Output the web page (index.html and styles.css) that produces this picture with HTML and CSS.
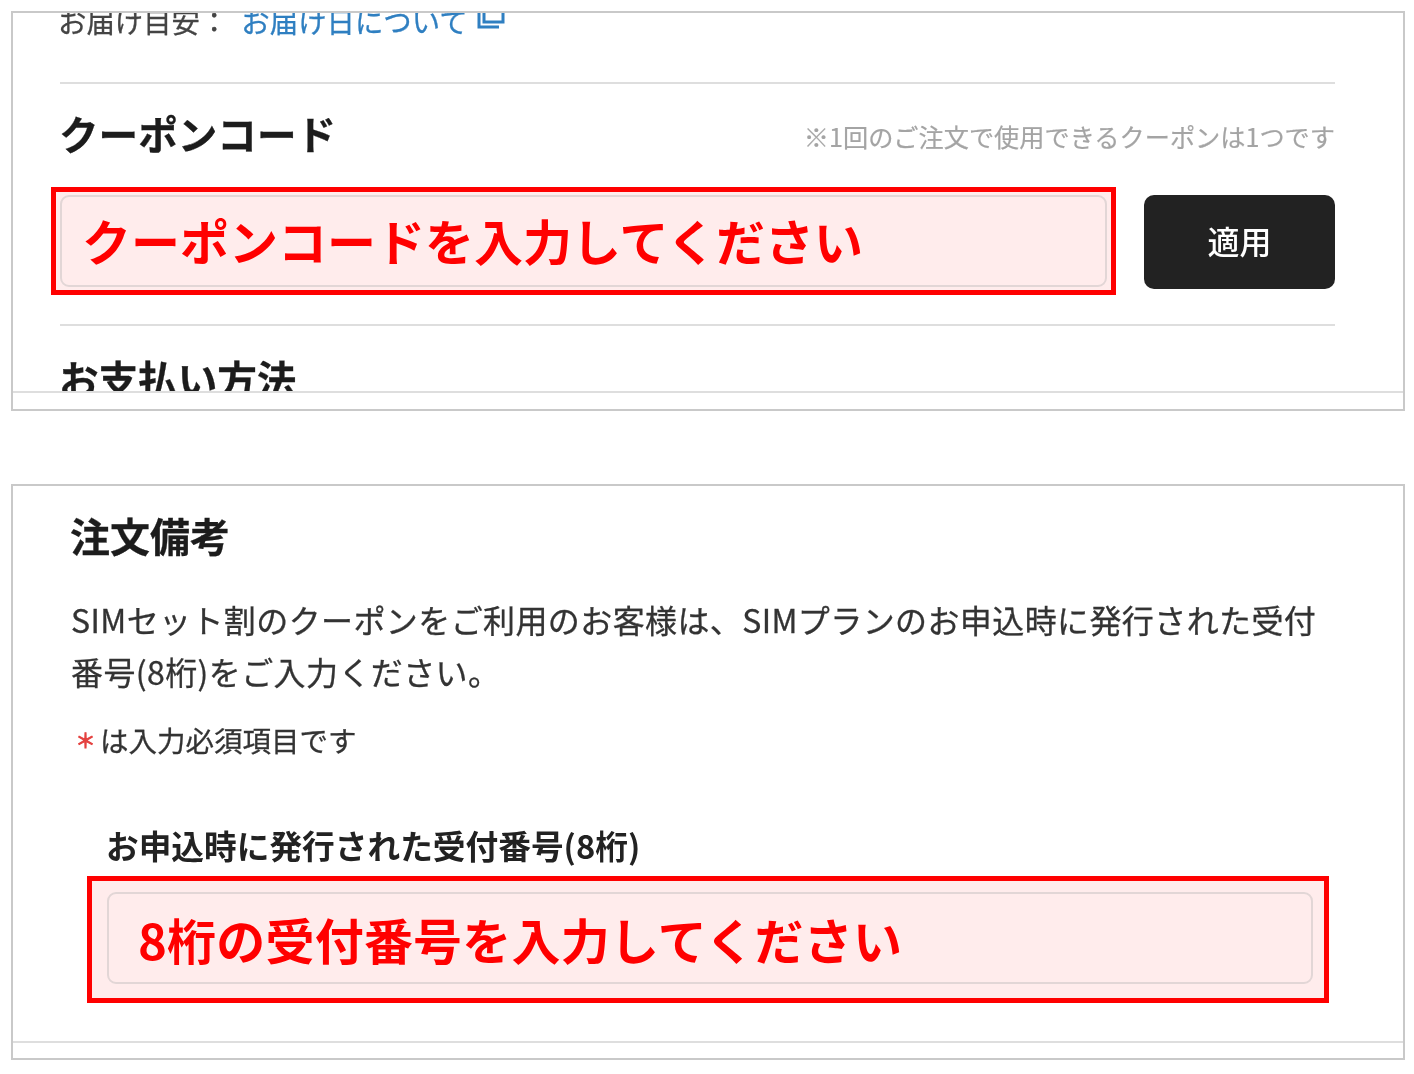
FILE: index.html
```html
<!DOCTYPE html>
<html lang="ja">
<head>
<meta charset="utf-8">
<title>クーポンコード</title>
<link rel="stylesheet" href="styles.css">
</head>
<body>
<main class="page">
  <section class="panel panel-top">
    <div class="panel-body panel-body-top">
      <p class="delivery">お届け目安：<a class="delivery-link" href="#">お届け日について<svg class="ext-icon" viewBox="0 0 28 28" aria-hidden="true"><path d="M2 2V20H22" fill="none" stroke="#2f7fc1" stroke-width="3"/><rect x="7" y="-4" width="19" height="19" fill="none" stroke="#2f7fc1" stroke-width="3"/></svg></a></p>
      <hr class="rule">
      <div class="coupon-head">
        <h2 class="heading heading-coupon">クーポンコード</h2>
        <span class="coupon-note">※1回のご注文で使用できるクーポンは1つです</span>
      </div>
      <div class="coupon-row">
        <div class="mark mark-coupon">
          <input class="field field-coupon" type="text" placeholder="クーポンコードを入力してください">
        </div>
        <button class="apply" type="button">適用</button>
      </div>
      <hr class="rule rule-lower">
      <h2 class="heading heading-pay">お支払い方法</h2>
    </div>
  </section>
  <section class="panel panel-bottom">
    <div class="panel-body panel-body-bottom">
      <h2 class="heading">注文備考</h2>
      <p class="lead">SIMセット割のクーポンをご利用のお客様は、SIMプランのお申込時に発行された受付番号(8桁)をご入力ください。</p>
      <p class="required"><span class="star">＊</span>は入力必須項目です</p>
      <label class="field-label" for="receipt">お申込時に発行された受付番号(8桁)</label>
      <div class="mark mark-receipt">
        <input id="receipt" class="field field-receipt" type="text" placeholder="8桁の受付番号を入力してください">
      </div>
    </div>
  </section>
</main>
</body>
</html>
```
FILE: styles.css
```css
* { box-sizing: border-box; }
html, body { margin: 0; background: #fff; }
body {
  font-family: "Noto Sans CJK JP", "Noto Sans", sans-serif;
  color: #333;
}
.page {
  padding: 11px 9px 0 11px;
  filter: blur(0.7px);
}
.panel {
  border: 2px solid #c9c9c9;
  background: #fff;
}
.panel-top { height: 400px; margin-bottom: 73px; }
.panel-bottom { height: 576px; }
.panel-body {
  overflow: hidden;
  border-bottom: 2px solid #dedede;
}
.panel-body-top {
  height: 380px;
  padding: 0 68px 0 47px;
}
.panel-body-bottom {
  height: 557px;
  padding: 29px 71px 0 58px;
}
.delivery {
  margin: -6px 0 47px -2px;
  font-size: 28.4px;
  line-height: 28px;
  color: #444;
  display: flex;
  -webkit-text-stroke: 0.3px #444;
}
.delivery-link {
  margin-left: 13px;
  color: #2f7fc1;
  text-decoration: none;
  display: flex;
  -webkit-text-stroke: 0.3px #2f7fc1;
}
.ext-icon { width: 28px; height: 28px; margin-left: 9px; flex: none; }
.rule {
  margin: 0;
  border: 0;
  height: 2px;
  background: #dedede;
}
.rule-lower { margin-top: 29px; }
.coupon-head {
  display: flex;
  justify-content: space-between;
  align-items: center;
  padding-top: 29px;
  margin-bottom: 34px;
}
.heading {
  margin: 0 0 0 -1px;
  font-size: 40px;
  line-height: 40px;
  font-weight: 700;
  color: #1c1c1c;
  -webkit-text-stroke: 0.3px #1c1c1c;
}
.heading-coupon { font-size: 39.6px; }
.heading-pay { margin-top: 32px; font-size: 39.6px; }
.coupon-note {
  font-size: 25.2px;
  line-height: 30px;
  color: #a4a4a4;
  margin-top: 6px;
  -webkit-text-stroke: 0.2px #a4a4a4;
}
.coupon-row {
  display: flex;
  align-items: center;
  gap: 28px;
}
.mark {
  display: flex;
  min-width: 0;
  border: 5px solid #f00;
  background: #ffecec;
}
.mark-coupon {
  flex: 1;
  height: 108px;
  margin-left: -9px;
  padding: 3px 4px;
}
.mark-receipt {
  height: 127px;
  margin: 0 3px 0 16px;
  padding: 11px 11px 14px 15px;
}
.field {
  flex: 1;
  min-width: 0;
  border: 2px solid #e2d6d6;
  border-radius: 9px;
  background: #ffecec;
  font-family: inherit;
  font-size: 49px;
  font-weight: 700;
  color: #f00;
}
.field::placeholder { color: #f00; opacity: 1; }
.field-coupon { padding: 0 0 4px 20px; }
.field-receipt { padding: 0 0 0 29px; letter-spacing: 0.2px; }
.apply {
  flex: none;
  width: 191px;
  height: 94px;
  margin-top: 2px;
  padding: 0 0 4px;
  border: 0;
  border-radius: 10px;
  background: #222;
  color: #fff;
  font-family: inherit;
  font-size: 32px;
  font-weight: 500;
}
.lead {
  margin: 38px 0 28px;
  font-size: 32px;
  line-height: 52px;
  letter-spacing: 0.4px;
  color: #333;
  -webkit-text-stroke: 0.3px #333;
}
.required {
  margin: 0 0 72px;
  font-size: 28.5px;
  line-height: 30px;
  color: #333;
  display: flex;
  -webkit-text-stroke: 0.3px #333;
}
.star { color: #e4413f; font-size: 20px; width: 29px; text-align: center; -webkit-text-stroke: 1px #e4413f; }
.field-label {
  display: block;
  margin: 0 0 13px 35px;
  font-size: 32.7px;
  line-height: 36px;
  font-weight: 700;
  color: #222;
}
```
